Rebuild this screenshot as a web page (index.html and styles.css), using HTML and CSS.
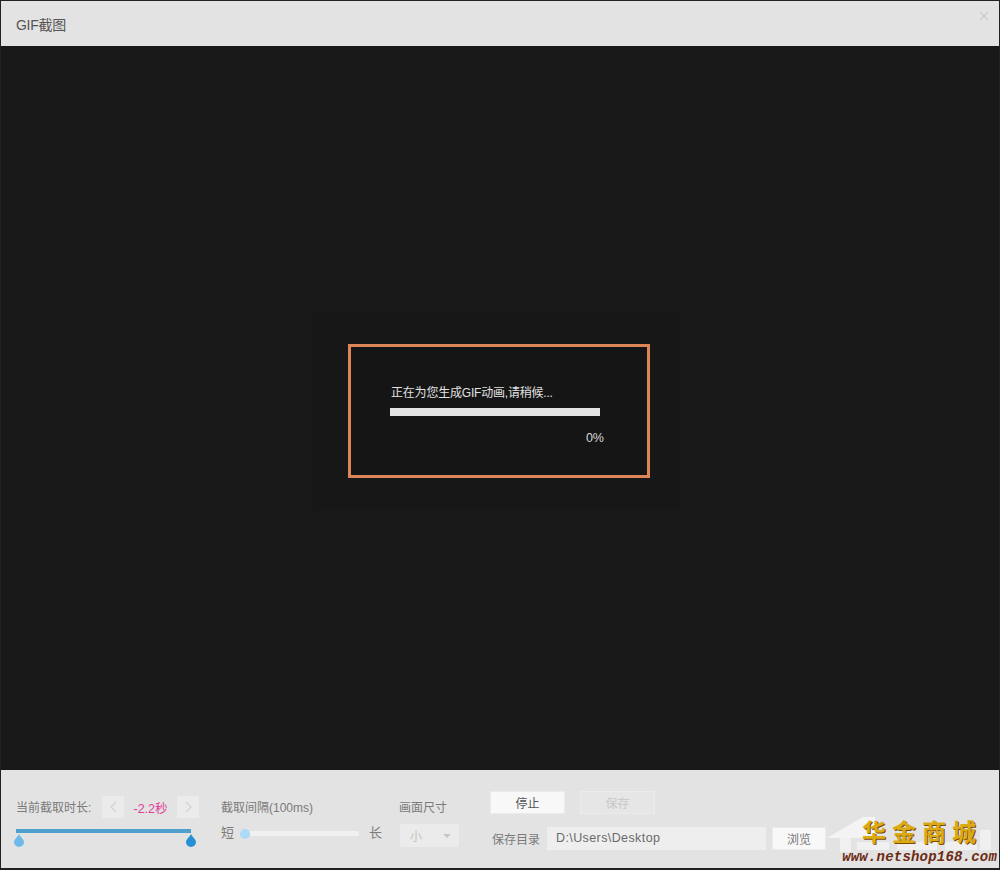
FILE: index.html
```html
<!DOCTYPE html>
<html lang="zh-CN">
  <head>
    <meta charset="UTF-8" />
    <title>GIF截图</title>
    <link rel="stylesheet" href="styles.css">
  </head>

  <body>
    <div class="window">
      <div class="titlebar">
        <span class="title">GIF截图</span>
        <svg class="close" width="10" height="10" viewBox="0 0 10 10">
          <path d="M1 1L9 9M9 1L1 9" stroke="#cfcfcf" stroke-width="1.6" fill="none" />
        </svg>
      </div>

      <div class="stage">
        <div class="progress-box">
          <p class="progress-text">正在为您生成GIF动画,请稍候...</p>
          <div class="progress-bar"></div>
          <p class="progress-num">0%</p>
        </div>
      </div>

      <div class="toolbar">
        <div class="col-duration">
          <div class="duration-row">
            <span class="label">当前截取时长:</span>
            <span class="step">
              <svg width="7" height="12" viewBox="0 0 7 12"><path d="M6 1L1 6L6 11" stroke="#d2d2d2" stroke-width="1.2" fill="none" /></svg>
            </span>
            <span class="duration">-2.2秒</span>
            <span class="step">
              <svg width="7" height="12" viewBox="0 0 7 12"><path d="M1 1L6 6L1 11" stroke="#d2d2d2" stroke-width="1.2" fill="none" /></svg>
            </span>
          </div>
          <div class="range">
            <div class="range-line"></div>
            <div class="range-drops">
              <svg width="10" height="13" viewBox="0 0 10 13"><path d="M5 0C6 3 10 5 10 8A5 5 0 0 1 0 8C0 5 4 3 5 0Z" fill="#6dbaea" /></svg>
              <svg width="10" height="13" viewBox="0 0 10 13"><path d="M5 0C6 3 10 5 10 8A5 5 0 0 1 0 8C0 5 4 3 5 0Z" fill="#2490d6" /></svg>
            </div>
          </div>
        </div>

        <div class="col-interval">
          <div class="label">截取间隔(100ms)</div>
          <div class="interval-row">
            <span class="label big">短</span>
            <div class="slider">
              <span class="slider-knob"></span>
            </div>
            <span class="label big">长</span>
          </div>
        </div>

        <div class="col-size">
          <div class="label">画面尺寸</div>
          <div class="select">
            <span>小</span>
            <span class="caret"></span>
          </div>
        </div>

        <div class="col-save">
          <div class="button-row">
            <button class="btn">停止</button>
            <button class="btn disabled">保存</button>
          </div>
          <div class="path-row">
            <span class="label">保存目录</span>
            <div class="path">D:\Users\Desktop</div>
            <button class="btn browse">浏览</button>
          </div>
        </div>
      </div>

      <!-- site watermark sits on top of the toolbar corner -->
      <div class="watermark">
        <svg class="house" width="172" height="54" viewBox="0 0 172 54">
          <path d="M0 24L36 3L48 3L48 24Z" fill="#f4f4f4" />
          <path d="M13 24H24V38H13ZM30 28H62V36H30ZM70 28H110V36H70ZM118 28H150V36H118ZM153 16H164V36H153Z" fill="#f0f0f0" />
        </svg>
        <div class="wm-name">华金商城</div>
        <div class="wm-url">www.netshop168.com</div>
      </div>
    </div>
  </body>
</html>
```

FILE: styles.css
```css
* {
  box-sizing: border-box;
}

html,
body {
  margin: 0;
  padding: 0;
}

body {
  font-family: "Liberation Sans", "Noto Sans CJK SC", sans-serif;
  color: #666;
  background: #1a1a1a;
}

.window {
  position: relative;
  width: 1000px;
  height: 870px;
  display: flex;
  flex-direction: column;
  overflow: hidden;
  border: 1px solid #222;
  border-bottom-width: 2px;
}

.titlebar {
  height: 45px;
  flex: none;
  display: flex;
  align-items: center;
  justify-content: space-between;
  padding: 0 10px 0 15px;
  background: #e3e3e3;
}

.title {
  font-size: 14px;
  letter-spacing: -0.3px;
  color: #555;
}

.close {
  margin-bottom: 16px;
}

.stage {
  flex: 1;
  display: flex;
  align-items: center;
  justify-content: center;
  padding: 6px 2px 0 0;
  background: #181818;
}

.progress-box {
  width: 302px;
  height: 134px;
  padding: 37px 39px 0;
  border: 3px solid #dd8557;
  background: #151515;
  box-shadow: 0 0 0 30px #171717;
}

.progress-text {
  margin: 0 0 0 1px;
  font-size: 12px;
  line-height: 18px;
  letter-spacing: -0.2px;
  color: #e2e2e2;
}

.progress-bar {
  width: 210px;
  height: 8px;
  margin-top: 6px;
  background: #e3e3e3;
}

.progress-num {
  width: 214px;
  margin: 13px 0 0;
  font-size: 12.5px;
  line-height: 18px;
  color: #d8d8d8;
  text-align: right;
}

.toolbar {
  height: 98px;
  flex: none;
  display: flex;
  padding: 19px 0 0 15px;
  background: #e3e3e3;
}

.label {
  font-size: 12px;
  line-height: 18px;
  color: #7a7a7a;
  white-space: nowrap;
}

.label.big {
  font-size: 13px;
}

.col-duration {
  width: 183px;
  margin-right: 22px;
}

.duration-row {
  display: flex;
  align-items: center;
  height: 24px;
  margin-top: 6px;
}

.step {
  width: 22px;
  height: 22px;
  display: flex;
  align-items: center;
  justify-content: center;
  background: #ebebeb;
}

.duration-row .label {
  width: 86px;
  padding-top: 2px;
}

.duration {
  width: 53px;
  padding-top: 1px;
  font-size: 12.5px;
  color: #df3f9a;
  text-align: center;
}

.range {
  margin-top: 10px;
}

.range-line {
  height: 4px;
  background: #4fa0cc;
  width: 175px;
}

.range-drops {
  display: flex;
  justify-content: space-between;
  width: 182px;
  margin-left: -2px;
  margin-top: 1px;
}

.col-interval {
  width: 161px;
  margin-right: 17px;
  padding-top: 10px;
}

.interval-row {
  display: flex;
  align-items: center;
  justify-content: space-between;
  margin-top: 7px;
}

.slider {
  position: relative;
  width: 115px;
  height: 5px;
  background: #f1f1f1;
  border-radius: 3px;
}

.slider-knob {
  position: absolute;
  left: -4px;
  top: -2px;
  width: 10px;
  height: 10px;
  border-radius: 50%;
  background: #abdaf6;
}

.col-size {
  width: 60px;
  margin-right: 31px;
  padding-top: 10px;
}

.select {
  display: flex;
  align-items: center;
  justify-content: space-between;
  width: 59px;
  height: 23px;
  margin-top: 7px;
  margin-left: 1px;
  padding: 0 8px 0 10px;
  font-size: 12px;
  color: #c4c4c4;
  background: #ebebeb;
}

.caret {
  width: 0;
  height: 0;
  border-left: 4px solid transparent;
  border-right: 4px solid transparent;
  border-top: 4px solid #c6c6c6;
}

.col-save {
  width: 340px;
}

.button-row {
  display: flex;
  gap: 15px;
  margin-top: 2px;
}

.btn {
  width: 75px;
  height: 23px;
  padding: 0;
  font-family: inherit;
  font-size: 12px;
  color: #555;
  background: #f8f8f8;
  border: 1px solid #ebebeb;
}

.btn.disabled {
  color: #c8c8c8;
  background: #e6e6e6;
  border-color: #ececec;
}

.path-row {
  display: flex;
  align-items: center;
  margin-top: 13px;
}

.path-row .label {
  width: 57px;
  padding-left: 2px;
  margin-top: 2px;
}

.path {
  width: 219px;
  height: 23px;
  margin-right: 6px;
  padding-left: 9px;
  font-size: 12.5px;
  line-height: 22px;
  letter-spacing: 0.4px;
  color: #6a6a6a;
  background: #eeeeee;
}

.btn.browse {
  width: 54px;
  color: #777;
}

.watermark {
  position: absolute;
  right: 0;
  bottom: 0;
  width: 172px;
  height: 54px;
  pointer-events: none;
}

.house {
  position: absolute;
  left: 0;
  top: 0;
}

.wm-name {
  position: absolute;
  left: 35px;
  top: 0;
  font-family: "Noto Sans CJK SC", sans-serif;
  font-size: 24px;
  font-weight: 700;
  line-height: 34px;
  letter-spacing: 6px;
  white-space: nowrap;
  color: #dcaa12;
  text-shadow: 1px 1px 0 #7d4b05;
}

.wm-url {
  position: absolute;
  right: 2px;
  bottom: 3px;
  font-family: "Liberation Mono", monospace;
  font-size: 14px;
  font-weight: 700;
  font-style: italic;
  line-height: 16px;
  letter-spacing: 0.2px;
  color: #6b2a12;
  white-space: nowrap;
}
```
